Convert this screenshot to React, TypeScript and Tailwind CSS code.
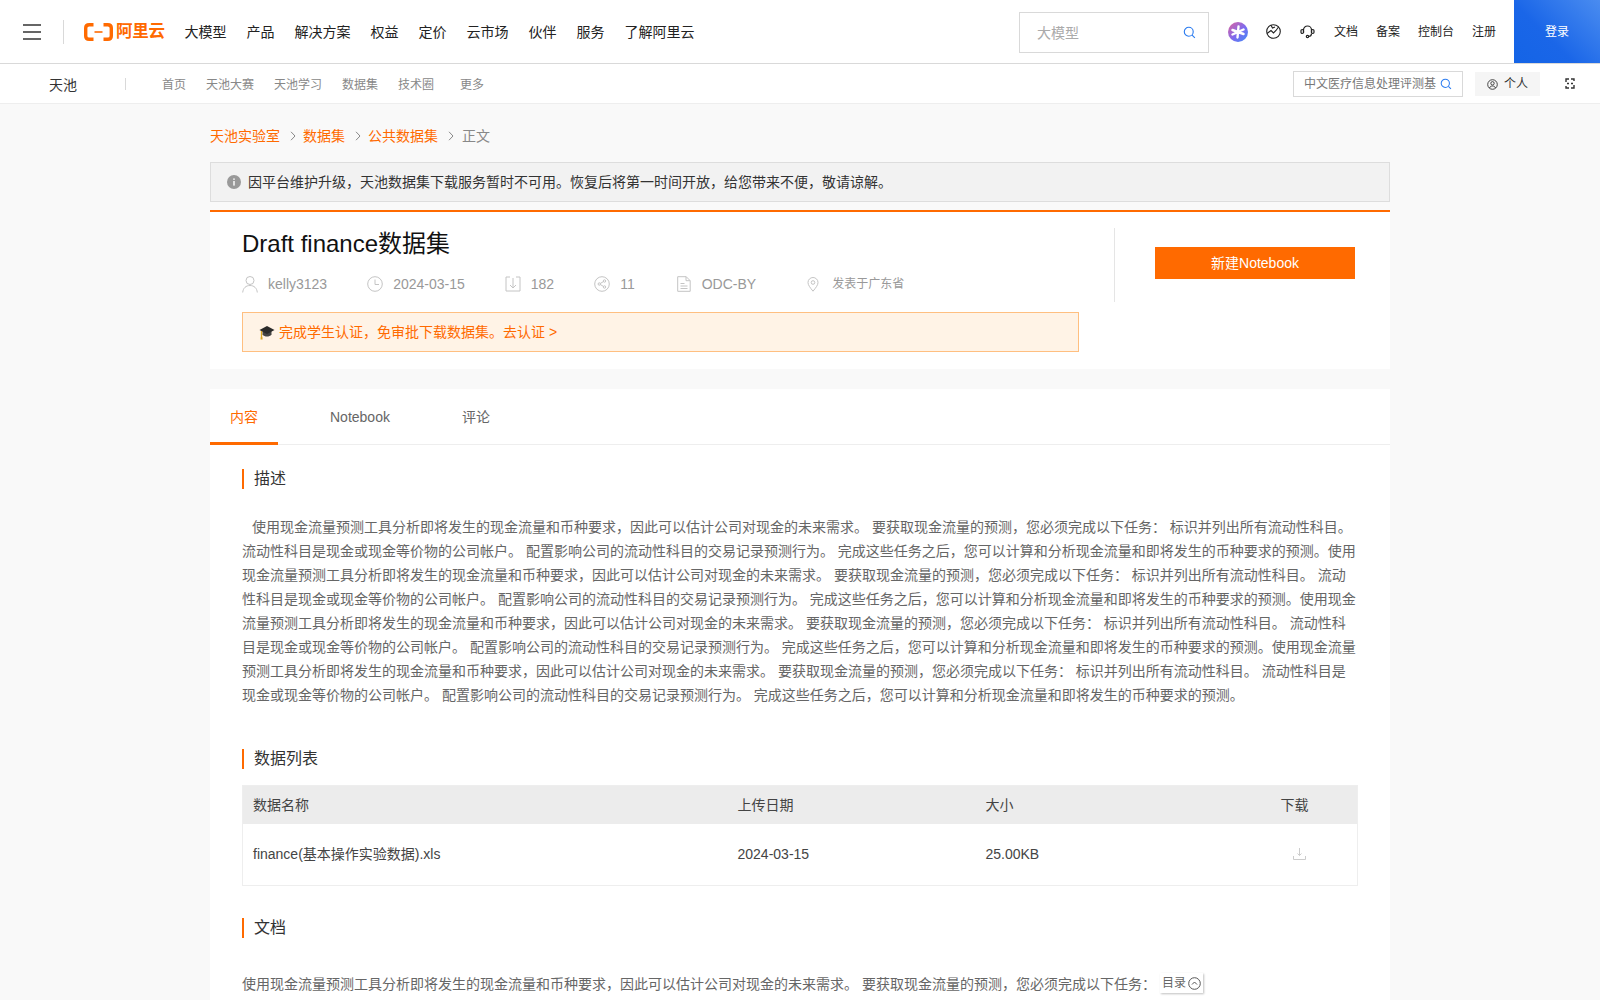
import React from "react";

const FONT = "[font-family:'Liberation_Sans','Noto_Sans_CJK_SC',sans-serif]";
const UNIT = "使用现金流量预测工具分析即将发生的现金流量和币种要求，因此可以估计公司对现金的未来需求。 要获取现金流量的预测，您必须完成以下任务： 标识并列出所有流动性科目。 流动性科目是现金或现金等价物的公司帐户。 配置影响公司的流动性科目的交易记录预测行为。 完成这些任务之后，您可以计算和分析现金流量和即将发生的币种要求的预测。";

function Search({ size = 14 }: { size?: number }) {
  return (
    <svg width={size} height={size} viewBox="0 0 14 14" fill="none" stroke="#2a7bf0" strokeWidth="1.2">
      <circle cx="6.2" cy="6.2" r="4.8" />
      <path d="M9.8 9.8 12.8 12.8" />
    </svg>
  );
}

function Chevron({ className = "" }: { className?: string }) {
  return (
    <svg width="6" height="10" viewBox="0 0 6 10" fill="none" stroke="#888" strokeWidth="1" className={className}>
      <path d="M1 .8 5 5 1 9.2" />
    </svg>
  );
}

function Section({ title }: { title: string }) {
  return (
    <div className="flex items-center gap-[10px] h-5">
      <span className="w-[2px] h-5 bg-[#ff6a00]" />
      <span className="text-base text-[#333]">{title}</span>
    </div>
  );
}

const G = "#c4c4c4";

function Meta({ icon, gap = "gap-[10px]", children, className = "" }: { icon: React.ReactNode; gap?: string; children: React.ReactNode; className?: string }) {
  return (
    <div className={`flex items-center ${gap} ${className}`}>
      {icon}
      <span>{children}</span>
    </div>
  );
}

export default function App() {
  return (
    <div className={`relative h-[1000px] overflow-hidden bg-[#f9f9f9] ${FONT}`}>
      {/* top bar */}
      <header className="flex h-[64px] items-stretch border-b border-[#d9d9d9] bg-white">
        <div className="flex items-center pl-[23px]">
          <div className="flex h-4 w-[18px] flex-col justify-between">
            <span className="h-[2px] bg-[#666]" />
            <span className="h-[2px] bg-[#666]" />
            <span className="h-[2px] bg-[#666]" />
          </div>
          <span className="ml-[22px] h-6 w-px bg-[#d9d9d9]" />
          <div className="ml-5 flex items-center gap-[3px]">
            <svg width="29" height="18" viewBox="0 0 29 18" fill="none">
              <path d="M9.5 1.7H5.2C3 1.7 1.700 3 1.700 5v8c0 2 1.300 3.300 3.500 3.300H9.500" stroke="#ff6a00" strokeWidth="3.400" />
              <path d="M19.500 1.700h4.300c2.200 0 3.500 1.300 3.500 3.300v8c0 2-1.300 3.300-3.500 3.300H19.500" stroke="#ff6a00" strokeWidth="3.400" />
              <path d="M10.500 9h8" stroke="#ff6a00" strokeWidth="1.600" />
            </svg>
            <span className="text-[16.5px] leading-none font-bold tracking-[-0.3px] text-[#ff6a00]">阿里云</span>
          </div>
          <nav className="ml-5 flex gap-5 text-sm text-[#222]">
            {["大模型", "产品", "解决方案", "权益", "定价", "云市场", "伙伴", "服务", "了解阿里云"].map((t) => (
              <span key={t}>{t}</span>
            ))}
          </nav>
        </div>
        <div className="ml-auto flex items-center">
          <div className="mt-[2px] mr-[-1px] translate-x-px flex h-[41px] w-[190px] items-center justify-between border border-[#d9d9d9] pr-3 pl-[17px] text-sm text-[#aaa]">
            <span>大模型</span>
            <Search size={13} />
          </div>
          <div className="ml-[21px] h-5 w-5 rounded-full bg-[linear-gradient(135deg,#e0609c,#7c6cf0_55%,#3f8cf5)] flex items-center justify-center">
            <svg width="14" height="14" viewBox="0 0 14 14" stroke="#fff" strokeWidth="2.400" strokeLinecap="round">
              <path d="M7.500 1.500 6.500 12.500M1.500 5 12.500 9M12.500 4.500 1.500 9.500" />
            </svg>
          </div>
          <svg className="ml-[18px]" width="15" height="15" viewBox="0 0 15 15" fill="none" stroke="#222" strokeWidth="1.100">
            <circle cx="7.500" cy="7.500" r="6.800" />
            <path d="M1 9.500 5 6.500l2.500 2.500 2.500-2.500 2.500-3.500" />
            <path d="M5 1.200 6.500 4 9 3" />
          </svg>
          <svg className="ml-[19px]" width="15" height="15" viewBox="0 0 15 15" fill="none" stroke="#222" strokeWidth="1.200">
            <path d="M3.500 9V6a4 4 0 0 1 8 0v3" />
            <rect x="1" y="5.500" width="2.500" height="4" rx="1.200" />
            <rect x="11.500" y="5.500" width="2.500" height="4" rx="1.200" />
            <path d="M11.500 9.500c0 2-1.500 3-3 3" />
            <circle cx="7.500" cy="12.500" r="1.200" />
          </svg>
          <div className="ml-[19px] flex gap-[18px] text-xs text-[#222]">
            <span>文档</span>
            <span>备案</span>
            <span>控制台</span>
            <span>注册</span>
          </div>
          <div className="ml-[18px] flex h-full w-[86px] items-center justify-center bg-[linear-gradient(225deg,#4a8cf0,#1a66e8_60%,#1464e6)] text-xs text-white">
            登录
          </div>
        </div>
      </header>

      {/* sub nav */}
      <div className="flex h-[40px] items-center border-b border-[#eee] bg-white">
        <span className="mt-[2px] ml-[49px] text-sm text-[#333]">天池</span>
        <span className="ml-12 h-3 w-px bg-[#d9d9d9]" />
        <nav className="mt-[2px] ml-9 flex text-xs text-[#888]">
          <span>首页</span>
          <span className="ml-5">天池大赛</span>
          <span className="ml-5">天池学习</span>
          <span className="ml-5">数据集</span>
          <span className="ml-5">技术圈</span>
          <span className="ml-[26px]">更多</span>
        </nav>
        <div className="ml-auto flex items-center">
          <div className="flex h-[26px] w-[170px] items-center border border-[#d9d9d9] pl-[10px] text-xs whitespace-nowrap text-[#777]">
            <span className="pt-px w-[132px]">中文医疗信息处理评测基</span>
            <span className="ml-1"><Search size={12} /></span>
          </div>
          <div className="ml-3 flex h-6 w-[65px] items-center justify-center gap-[6px] bg-[#f5f5f5] pt-px text-xs text-[#333]">
            <svg width="11" height="11" viewBox="0 0 11 11" fill="none" stroke="#333" strokeWidth="0.900">
              <circle cx="5.500" cy="5.500" r="4.800" />
              <circle cx="5.500" cy="4.300" r="1.700" />
              <path d="M2.500 9c.6-1.500 1.700-2 3-2s2.400.5 3 2" />
            </svg>
            个人
          </div>
          <svg className="mr-[25px] ml-[25px]" width="10" height="11" viewBox="0 0 10 11" fill="none" stroke="#333" strokeWidth="1.400">
            <path d="M4 1H1v3M6 1h3v2M4 10H1V8M6 10h3V7M2 5.500h2M6 5.500h2" />
          </svg>
        </div>
      </div>

      <main className="mx-auto w-[1180px]">
        {/* breadcrumb */}
        <div className="flex h-[58px] items-center pt-[6px] text-sm text-[#ff6a00]">
          <span>天池实验室</span>
          <Chevron className="mr-[7px] ml-[10px]" />
          <span>数据集</span>
          <Chevron className="mr-[7px] ml-[10px]" />
          <span>公共数据集</span>
          <Chevron className="mr-2 ml-[10px]" />
          <span className="text-[#888]">正文</span>
        </div>

        {/* notice */}
        <div className="flex h-10 items-center gap-[7px] border border-[#ddd] bg-[#f2f2f2] pl-4 text-sm text-[#333]">
          <svg width="14" height="14" viewBox="0 0 14 14">
            <circle cx="7" cy="7" r="7" fill="#999" />
            <rect x="6.300" y="6" width="1.400" height="4.600" fill="#fff" />
            <rect x="6.300" y="3.400" width="1.400" height="1.500" fill="#fff" />
          </svg>
          因平台维护升级，天池数据集下载服务暂时不可用。恢复后将第一时间开放，给您带来不便，敬请谅解。
        </div>

        {/* head card */}
        <section className="mt-2 flex h-[159px] border-t-2 border-[#ff6a00] bg-white pl-8">
          <div className="w-[837px]">
            <h1 className="mt-4 text-2xl leading-8 font-normal text-[#111]">Draft finance数据集</h1>
            <div className="mt-3 flex h-6 items-center text-sm text-[#999]">
              <Meta gap="gap-[10px]" icon={
                <svg width="16" height="18" viewBox="0 0 16 18" fill="none" stroke={G}>
                  <circle cx="8" cy="5.500" r="4" />
                  <path d="M.7 17.500c.4-4.500 3.300-7 7.300-7s6.900 2.500 7.300 7" />
                </svg>
              }>kelly3123</Meta>
              <Meta className="ml-[40px]" icon={
                <svg width="16" height="16" viewBox="0 0 16 16" fill="none" stroke={G}>
                  <circle cx="8" cy="8" r="7.300" />
                  <path d="M8 3.500V8.500h4" />
                </svg>
              }>2024-03-15</Meta>
              <Meta className="ml-[40px]" icon={
                <svg width="16" height="16" viewBox="0 0 16 16" fill="none" stroke={G}>
                  <path d="M5 1H1v14h14V1h-4" />
                  <path d="M8 2v10M5 9l3 3 3-3" />
                </svg>
              }>182</Meta>
              <Meta className="ml-[40px]" icon={
                <svg width="16" height="16" viewBox="0 0 16 16" fill="none" stroke={G}>
                  <circle cx="8" cy="8" r="7.300" />
                  <circle cx="5.300" cy="8" r="1.200" />
                  <circle cx="10.500" cy="5" r="1.200" />
                  <circle cx="10.500" cy="11" r="1.200" />
                  <path d="M6.400 7.400 9.400 5.600M6.400 8.600l3 1.800" />
                </svg>
              }>11</Meta>
              <Meta gap="gap-[11px]" className="ml-[42px]" icon={
                <svg width="14" height="16" viewBox="0 0 14 16" fill="none" stroke={G}>
                  <path d="M.7.700h8.500l4 4v10.600H.7z" />
                  <path d="M9 .700v4h4M3.500 7.500h4M3.500 10h7M3.500 12.500h7" />
                </svg>
              }>ODC-BY</Meta>
              <div className="ml-[51px] flex items-center gap-[13px] text-xs">
                <svg width="12" height="15" viewBox="0 0 12 15" fill="none" stroke={G}>
                  <path d="M6 14.200C3 10.500 1 8 1 5.500a5 5 0 0 1 10 0C11 8 9 10.500 6 14.200z" />
                  <circle cx="6" cy="5.500" r="1.800" />
                </svg>
                发表于广东省
              </div>
            </div>
            <div className="mt-4 flex h-10 items-center gap-1 border border-[#ffbf80] bg-[#fff3e6] pl-4 text-sm text-[#ff6a00]">
              <svg width="16" height="16" viewBox="0 0 16 16">
                <path d="M3.500 7v3.500c1 1.500 2.800 2 4.500 2s3.500-.5 4.500-2V7z" fill="#444" />
                <path d="M8 2 .5 6 8 10l7.500-4z" fill="#2b2b2b" />
                <path d="M2.500 7v6" stroke="#d9a520" strokeWidth="1.300" />
                <path d="M1.700 13h1.700l.2 2.500H1.500z" fill="#d9a520" />
              </svg>
              完成学生认证，免审批下载数据集。去认证 &gt;
            </div>
          </div>
          <div className="mt-4 ml-[35px] flex h-[74px] w-[241px] items-start border-l border-[#e5e5e5] pt-[19px] pl-10">
            <div className="flex h-8 w-[200px] items-center justify-center bg-[#ff6a00] text-sm text-white">新建Notebook</div>
          </div>
        </section>

        {/* content card */}
        <section className="mt-5 h-[700px] bg-white">
          <div className="flex h-[56px] border-b border-[#eee] text-sm text-[#666]">
            <div className="flex w-[68px] items-center justify-center border-b-[3px] border-[#ff6a00] pt-[3px] text-[#ff6a00] -mb-px">内容</div>
            <div className="ml-[52px] flex items-center">Notebook</div>
            <div className="ml-[72px] flex items-center">评论</div>
          </div>
          <div className="px-8 pt-6">
            <Section title="描述" />
            <p className="mt-[26px] text-sm leading-6 text-[#666] indent-[10px]">{UNIT + UNIT + UNIT + UNIT}</p>
            <div className="mt-[42px]">
              <Section title="数据列表" />
            </div>
            <table className="mt-4 w-full table-fixed border border-[#eee] text-sm text-[#444]">
              <thead>
                <tr className="h-[38px] bg-[#ececec] text-left">
                  <th className="w-[495px] pl-[10px] font-normal">数据名称</th>
                  <th className="w-[248px] font-normal">上传日期</th>
                  <th className="w-[295px] font-normal">大小</th>
                  <th className="font-normal text-left">下载</th>
                </tr>
              </thead>
              <tbody>
                <tr className="h-[62px]">
                  <td className="pl-[10px]">finance(基本操作实验数据).xls</td>
                  <td>2024-03-15</td>
                  <td>25.00KB</td>
                  <td className="pl-[12px]">
                    <svg width="13" height="12" viewBox="0 0 13 12" fill="none" stroke="#ccc">
                      <path d="M6.500 0v7.500M4.500 5.500l2 2 2-2M.5 8v3.500h12V8" />
                    </svg>
                  </td>
                </tr>
              </tbody>
            </table>
            <div className="mt-8">
              <Section title="文档" />
            </div>
            <p className="mt-[34px] text-sm leading-6 text-[#666]">使用现金流量预测工具分析即将发生的现金流量和币种要求，因此可以估计公司对现金的未来需求。 要获取现金流量的预测，您必须完成以下任务：</p>
          </div>
        </section>
      </main>

      <div className="absolute top-[973px] left-[1160px] flex h-5 w-[43px] items-center gap-[2px] bg-white pl-[2px] text-xs text-[#666] shadow-[1px_1px_2px_rgba(0,0,0,0.25)]">
        目录
        <svg width="13" height="13" viewBox="0 0 13 13" fill="none" stroke="#555">
          <circle cx="6.500" cy="6.500" r="5.800" />
          <path d="M4 7.500 6.500 5 9 7.500" />
        </svg>
      </div>
    </div>
  );
}
